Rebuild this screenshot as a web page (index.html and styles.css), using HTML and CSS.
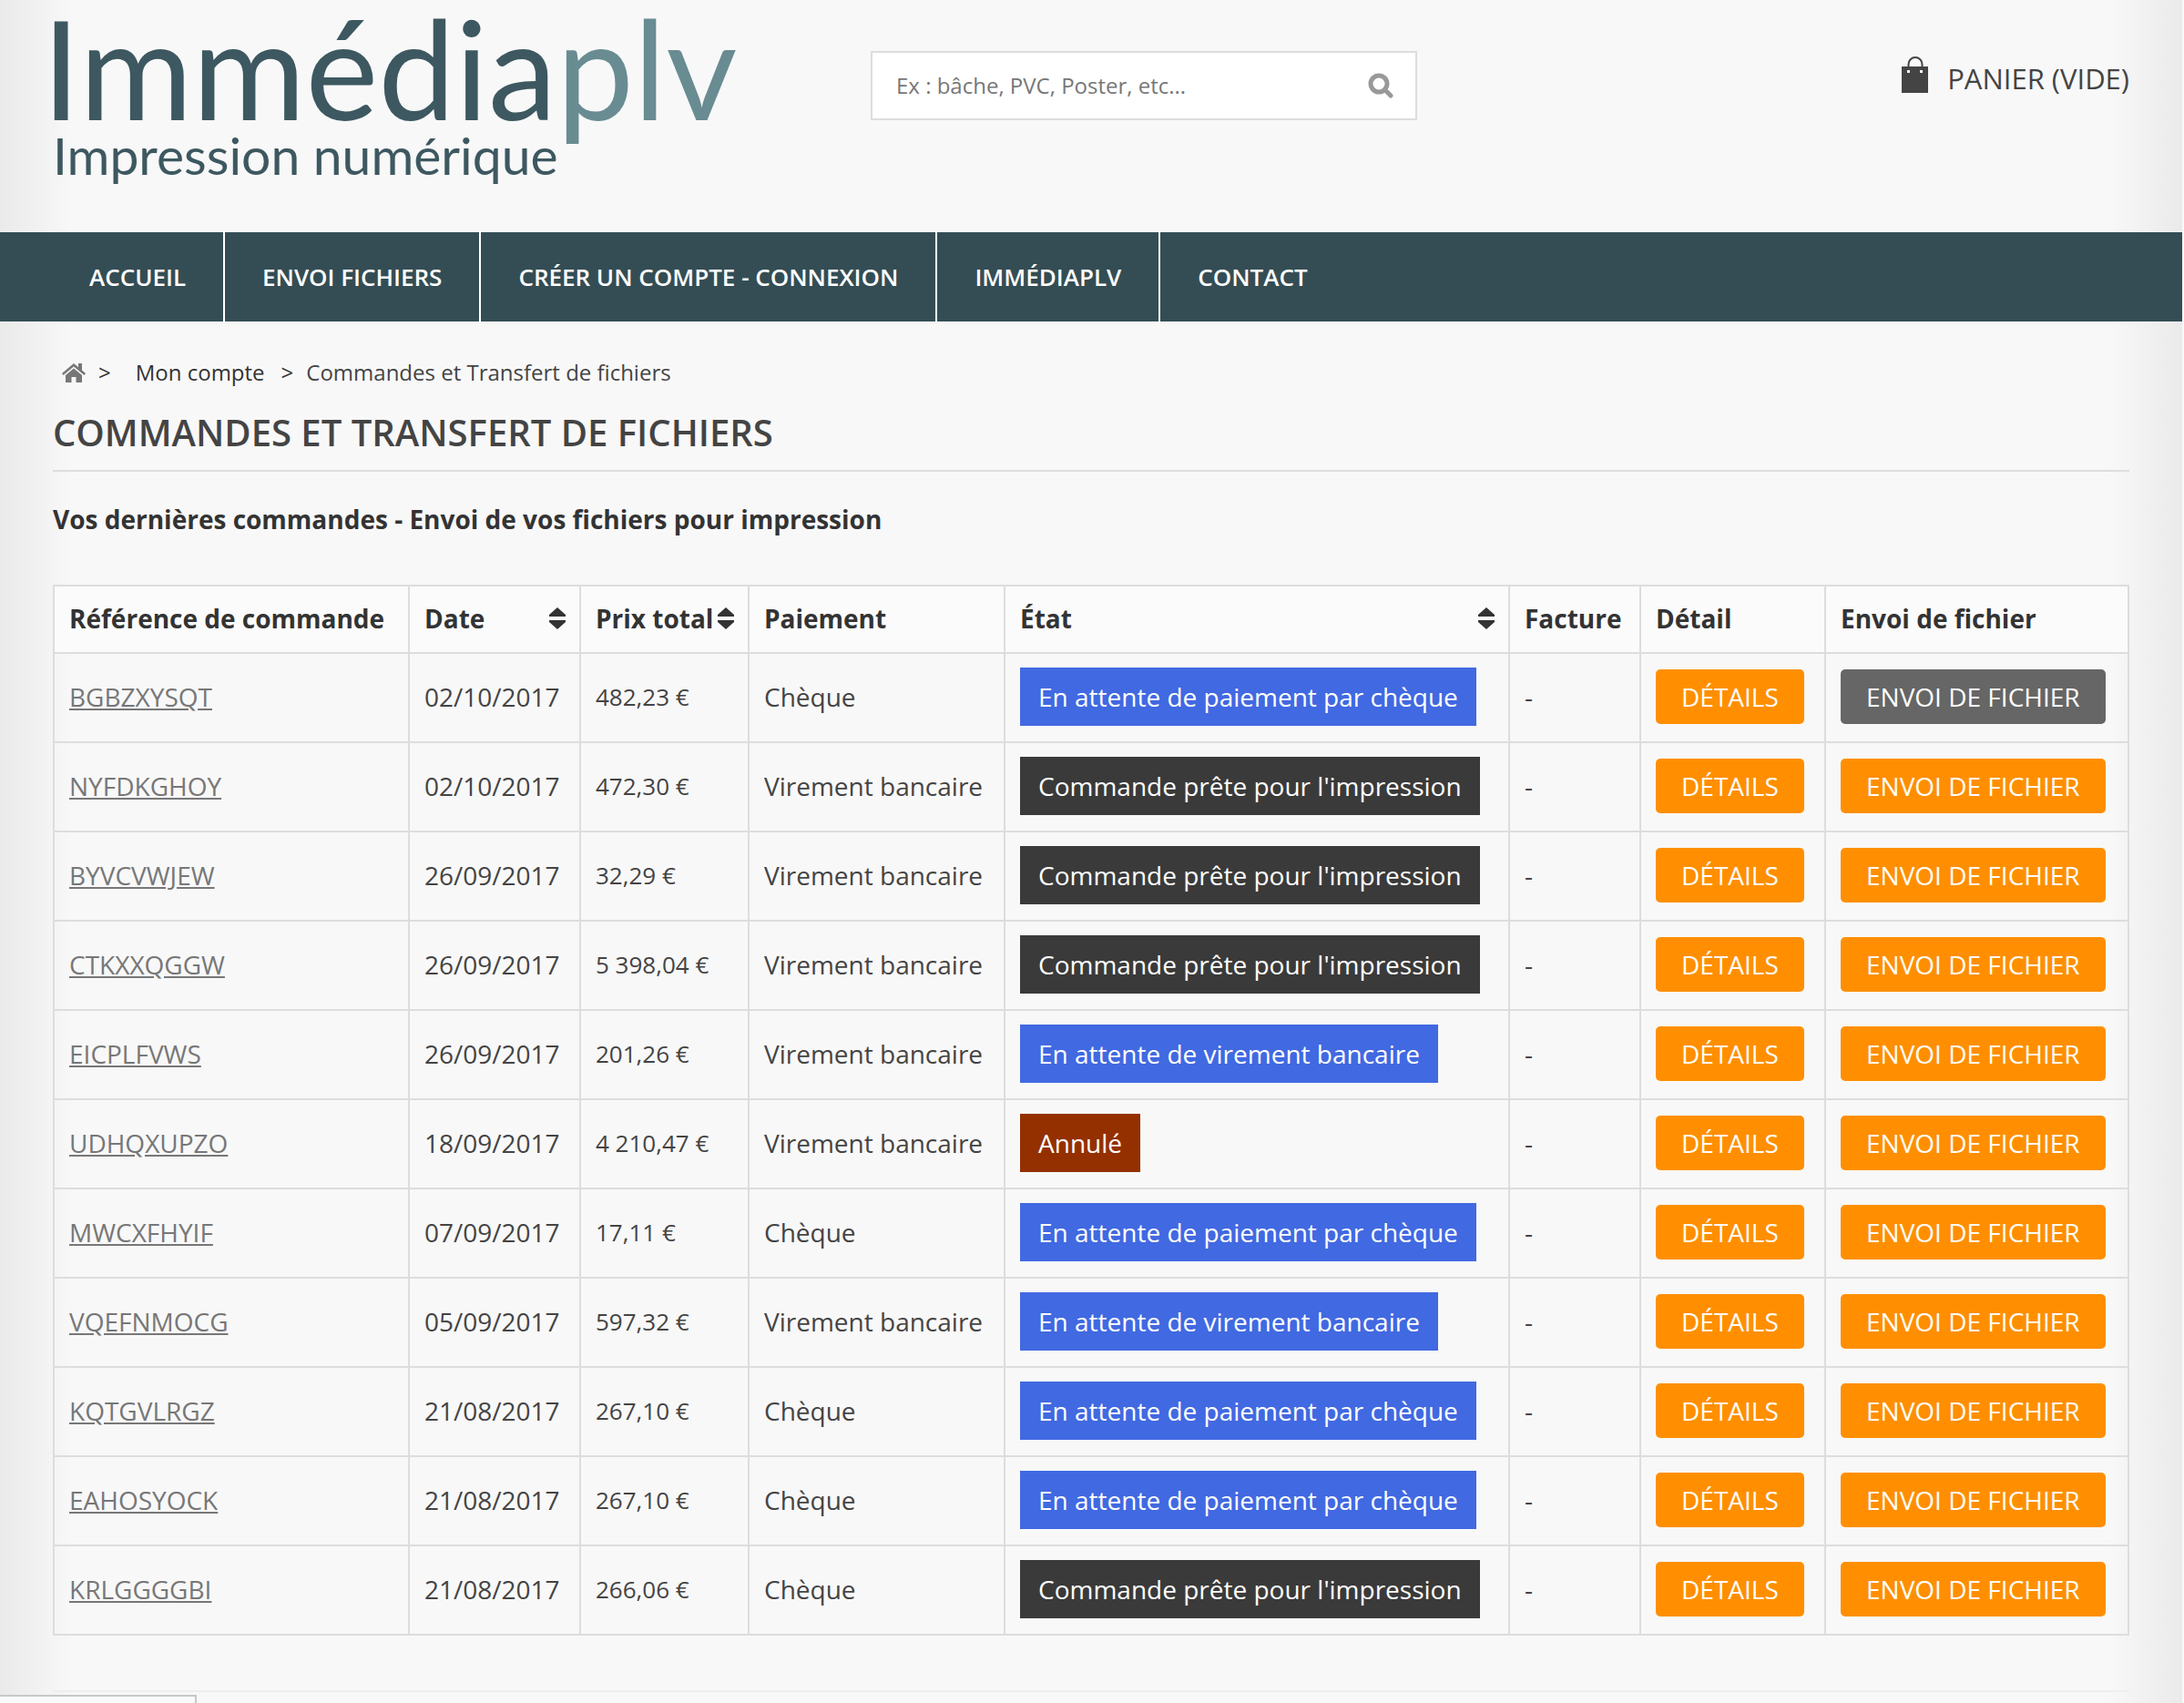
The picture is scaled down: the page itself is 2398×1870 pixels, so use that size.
FILE: index.html
```html
<!DOCTYPE html>
<html lang="fr">
<head>
<meta charset="utf-8">
<title>Commandes et Transfert de fichiers - Immédiaplv</title>
<link rel="stylesheet" href="styles.css">
</head>
<body>
<header class="header">
  <a class="logo" href="#">
    <span class="logo-name">Immédia<span class="logo-accent">plv</span></span>
    <span class="logo-tagline">Impression numérique</span>
  </a>
  <form class="search" role="search">
    <input class="search-input" type="text" aria-label="Rechercher" placeholder="Ex : bâche, PVC, Poster, etc...">
    <button class="search-button" type="button" aria-label="Rechercher">
      <svg width="28" height="28" viewBox="0 0 28 28" fill="none" stroke="#999" stroke-linecap="round"><circle cx="12" cy="12" r="9" stroke-width="5"/><path d="M19 19l6 6" stroke-width="5"/></svg>
    </button>
  </form>
  <a class="cart" href="#">
    <svg width="30" height="40" viewBox="0 0 30 40"><path d="M7.500 12V8.500a7.500 7.500 0 0 1 15 0V12" fill="none" stroke="#444" stroke-width="2"/><path fill="#444" d="M0 11h29v29H0z"/><path fill="#f8f8f8" d="M6 15h3v3H6zM20 15h3v3h-3z"/></svg>
    <span>PANIER (VIDE)</span>
  </a>
</header>
<nav class="nav">
  <a href="#">ACCUEIL</a>
  <a href="#">ENVOI FICHIERS</a>
  <a href="#">CRÉER UN COMPTE - CONNEXION</a>
  <a href="#">IMMÉDIAPLV</a>
  <a href="#">CONTACT</a>
</nav>
<main class="main">
  <div class="breadcrumb">
    <a class="home" href="#" aria-label="Accueil"><svg width="26" height="22" viewBox="0 0 26 22" fill="#777"><path d="M13 1L0 12l1.500 2L13 4.500 24.500 14l1.500-2-4-3.500V1h-4v4.200z"/><path d="M13 6.500L4 14v8h6.500v-6h5v6H22v-8z"/></svg></a>
    <span class="sep">&gt;</span>
    <a class="crumb" href="#">Mon compte</a>
    <span class="sep">&gt;</span>
    <span class="current">Commandes et Transfert de fichiers</span>
  </div>
  <h1 class="title">COMMANDES ET TRANSFERT DE FICHIERS</h1>
  <p class="intro">Vos dernières commandes - Envoi de vos fichiers pour impression</p>
  <table class="orders">
    <colgroup><col class="c-ref"><col class="c-date"><col class="c-price"><col class="c-pay"><col><col class="c-invoice"><col class="c-detail"><col class="c-send"></colgroup>
    <thead>
      <tr>
        <th>Référence de commande</th>
        <th><div class="sortable">Date<svg class="sort" width="18" height="24" viewBox="0 0 18 24"><path d="M9 0l9 8v2H0V8zM0 14h18v2l-9 8-9-8z"/></svg></div></th>
        <th><div class="sortable">Prix total<svg class="sort" width="18" height="24" viewBox="0 0 18 24"><path d="M9 0l9 8v2H0V8zM0 14h18v2l-9 8-9-8z"/></svg></div></th>
        <th>Paiement</th>
        <th><div class="sortable">État<svg class="sort" width="18" height="24" viewBox="0 0 18 24"><path d="M9 0l9 8v2H0V8zM0 14h18v2l-9 8-9-8z"/></svg></div></th>
        <th>Facture</th>
        <th>Détail</th>
        <th>Envoi de fichier</th>
      </tr>
    </thead>
    <tbody>
      <tr><td><a class="ref" href="#">BGBZXYSQT</a></td><td>02/10/2017</td><td class="price">482,23 €</td><td>Chèque</td><td><span class="state waiting">En attente de paiement par chèque</span></td><td>-</td><td><button class="btn">DÉTAILS</button></td><td><button class="btn btn-hover">ENVOI DE FICHIER</button></td></tr>
      <tr><td><a class="ref" href="#">NYFDKGHOY</a></td><td>02/10/2017</td><td class="price">472,30 €</td><td>Virement bancaire</td><td><span class="state ready">Commande prête pour l'impression</span></td><td>-</td><td><button class="btn">DÉTAILS</button></td><td><button class="btn">ENVOI DE FICHIER</button></td></tr>
      <tr><td><a class="ref" href="#">BYVCVWJEW</a></td><td>26/09/2017</td><td class="price">32,29 €</td><td>Virement bancaire</td><td><span class="state ready">Commande prête pour l'impression</span></td><td>-</td><td><button class="btn">DÉTAILS</button></td><td><button class="btn">ENVOI DE FICHIER</button></td></tr>
      <tr><td><a class="ref" href="#">CTKXXQGGW</a></td><td>26/09/2017</td><td class="price">5 398,04 €</td><td>Virement bancaire</td><td><span class="state ready">Commande prête pour l'impression</span></td><td>-</td><td><button class="btn">DÉTAILS</button></td><td><button class="btn">ENVOI DE FICHIER</button></td></tr>
      <tr><td><a class="ref" href="#">EICPLFVWS</a></td><td>26/09/2017</td><td class="price">201,26 €</td><td>Virement bancaire</td><td><span class="state waiting">En attente de virement bancaire</span></td><td>-</td><td><button class="btn">DÉTAILS</button></td><td><button class="btn">ENVOI DE FICHIER</button></td></tr>
      <tr><td><a class="ref" href="#">UDHQXUPZO</a></td><td>18/09/2017</td><td class="price">4 210,47 €</td><td>Virement bancaire</td><td><span class="state cancelled">Annulé</span></td><td>-</td><td><button class="btn">DÉTAILS</button></td><td><button class="btn">ENVOI DE FICHIER</button></td></tr>
      <tr><td><a class="ref" href="#">MWCXFHYIF</a></td><td>07/09/2017</td><td class="price">17,11 €</td><td>Chèque</td><td><span class="state waiting">En attente de paiement par chèque</span></td><td>-</td><td><button class="btn">DÉTAILS</button></td><td><button class="btn">ENVOI DE FICHIER</button></td></tr>
      <tr><td><a class="ref" href="#">VQEFNMOCG</a></td><td>05/09/2017</td><td class="price">597,32 €</td><td>Virement bancaire</td><td><span class="state waiting">En attente de virement bancaire</span></td><td>-</td><td><button class="btn">DÉTAILS</button></td><td><button class="btn">ENVOI DE FICHIER</button></td></tr>
      <tr><td><a class="ref" href="#">KQTGVLRGZ</a></td><td>21/08/2017</td><td class="price">267,10 €</td><td>Chèque</td><td><span class="state waiting">En attente de paiement par chèque</span></td><td>-</td><td><button class="btn">DÉTAILS</button></td><td><button class="btn">ENVOI DE FICHIER</button></td></tr>
      <tr><td><a class="ref" href="#">EAHOSYOCK</a></td><td>21/08/2017</td><td class="price">267,10 €</td><td>Chèque</td><td><span class="state waiting">En attente de paiement par chèque</span></td><td>-</td><td><button class="btn">DÉTAILS</button></td><td><button class="btn">ENVOI DE FICHIER</button></td></tr>
      <tr><td><a class="ref" href="#">KRLGGGGBI</a></td><td>21/08/2017</td><td class="price">266,06 €</td><td>Chèque</td><td><span class="state ready">Commande prête pour l'impression</span></td><td>-</td><td><button class="btn">DÉTAILS</button></td><td><button class="btn">ENVOI DE FICHIER</button></td></tr>
    </tbody>
  </table>
  <hr class="rule">
</main>
<div class="status-bar"></div>
</body>
</html>
```
FILE: styles.css
```css
* { box-sizing: border-box; }

html { overflow: hidden; background: #f8f8f8; }

body {
  margin: 0 2px 0 0;
  min-height: 100vh;
  color: #444;
  font: 28px/40px "Open Sans", sans-serif;
  background:
    linear-gradient(to right, #eaeaea, rgba(248, 248, 248, 0)) left / 80px 100% no-repeat,
    linear-gradient(to left, #eaeaea, rgba(248, 248, 248, 0)) right / 80px 100% no-repeat,
    #f8f8f8;
}

a { color: inherit; text-decoration: none; }
svg { display: block; flex: none; }
button, input { font: inherit; }

.header {
  display: grid;
  grid-template-columns: 898px 600px 1fr;
  align-items: start;
  height: 255px;
  padding: 0 58px;
}

.logo {
  display: flex;
  flex-direction: column;
  padding-top: 4px;
  color: #3d5860;
  font-family: Lato, sans-serif;
  white-space: nowrap;
}
.logo-name { margin-left: -12px; font-size: 151px; line-height: 140px; }
.logo-accent { color: #688c92; }
.logo-tagline { font-size: 57px; line-height: 52px; }

.search {
  display: flex;
  align-items: center;
  height: 76px;
  margin-top: 56px;
  border: 2px solid #ddd;
  background: #fff;
}
.search-input {
  flex: 1;
  min-width: 0;
  height: 72px;
  padding: 0 26px 2px;
  border: 0;
  outline: 0;
  background: none;
  color: #777;
  font-size: 24px;
}
.search-input::placeholder { color: #777; opacity: 1; }
.search-button { padding: 0 24px; border: 0; background: none; }

.cart {
  display: flex;
  justify-content: flex-end;
  gap: 20px;
  margin-top: 62px;
  font-size: 31px;
  line-height: 48px;
}

.nav {
  display: flex;
  height: 98px;
  margin-right: -2px;
  padding-left: 57px;
  background: #344d54;
  color: #fff;
  font-size: 26px;
  font-weight: 600;
  line-height: 98px;
}
.nav a { padding: 0 41px; border-right: 2px solid #fff; }
.nav a:last-child { border-right: 0; }

.main { padding: 36px 58px 0; }

.breadcrumb {
  display: flex;
  align-items: center;
  padding-left: 10px;
  font-size: 24px;
  color: #333;
}
.sep { padding: 0 14px; }
.crumb { padding: 0 4px 0 13px; }
.current { color: #444; }

.title {
  margin: 16px 0 32px;
  padding-bottom: 11px;
  border-bottom: 2px solid #ddd;
  font-size: 40px;
  font-weight: 600;
  line-height: 60px;
}

.intro {
  margin: 0 0 52px;
  color: #333;
  font-weight: 700;
}

.orders {
  width: 100%;
  table-layout: fixed;
  border-collapse: collapse;
  white-space: nowrap;
}
.orders th, .orders td {
  padding: 15px 16px 17px;
  border: 2px solid #ddd;
  text-align: left;
  vertical-align: middle;
}
.orders th { background: #fbfbfb; color: #333; font-weight: 700; }
.orders .price { font-size: 26px; }
.c-ref { width: 390px; }
.c-date { width: 188px; }
.c-price { width: 185px; }
.c-pay { width: 281px; }
.c-invoice { width: 144px; }
.c-detail { width: 203px; }
.c-send { width: 333px; }

.sortable { display: flex; align-items: center; justify-content: space-between; margin-right: -1px; }
.sort { fill: #333; }

.ref { color: #777; text-decoration: underline; }

.state { display: block; width: max-content; padding: 12px 20px; color: #fff; }
.waiting { background: #4169e1; }
.ready { background: #3a3a3a; }
.cancelled { background: #943000; }

.btn {
  display: block;
  height: 60px;
  padding: 0 28px;
  border: 0;
  border-radius: 5px;
  background: #ff8f00;
  color: #fff;
}
.btn-hover { background: #666; }

.rule { margin: 60px 0 0; border: 0; border-top: 2px solid #eee; }

/* Link preview shown by the browser in the corner of the window */
.status-bar {
  position: fixed;
  left: 0;
  bottom: 0;
  width: 216px;
  height: 9px;
  border: 2px solid #c8c8c8;
  border-width: 2px 2px 0 0;
  background: #fafafa;
}
```
